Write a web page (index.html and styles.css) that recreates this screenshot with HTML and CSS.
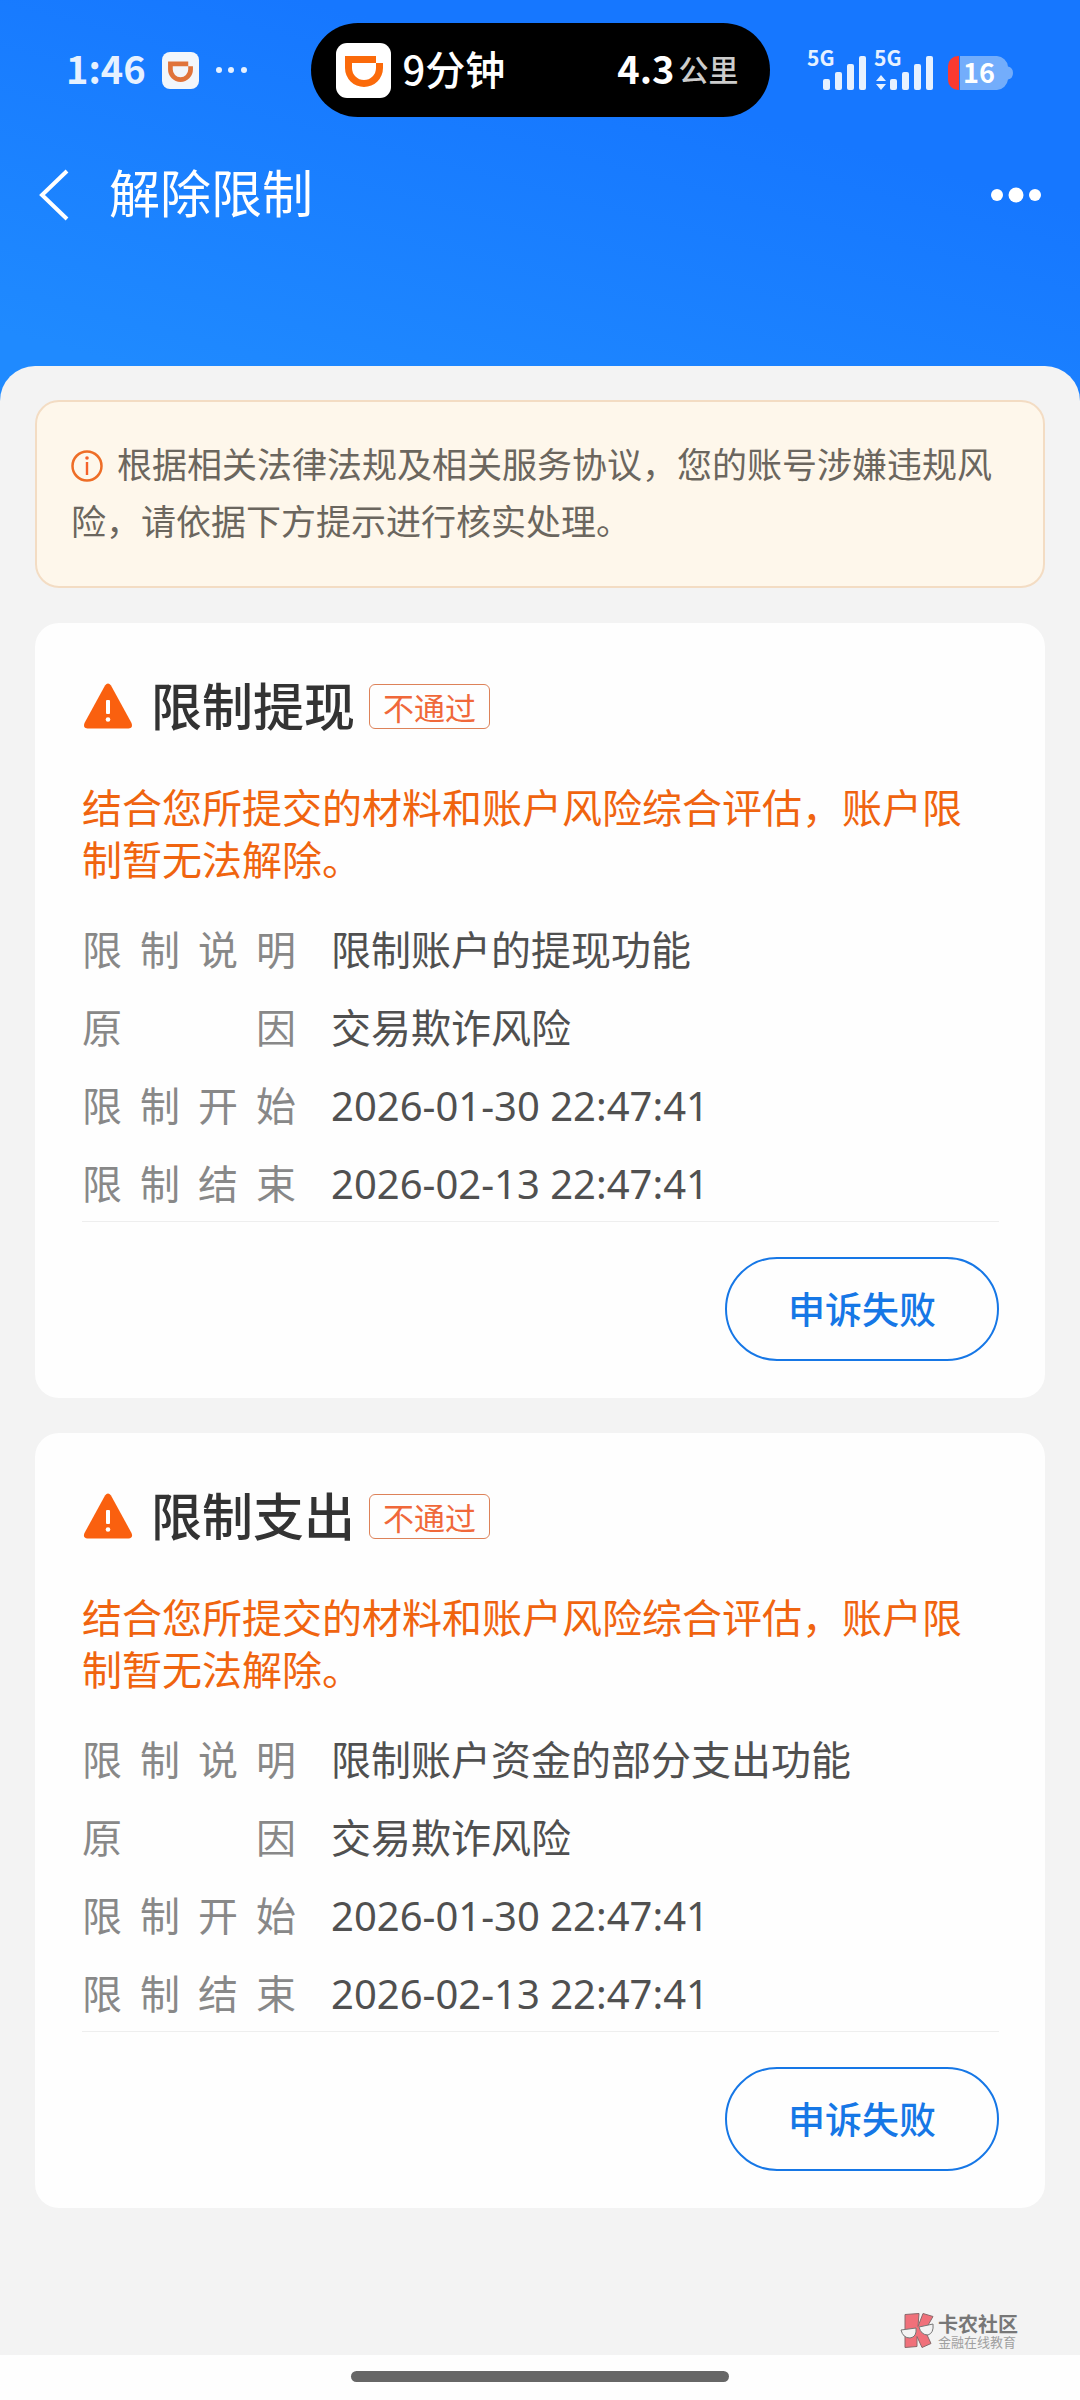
FILE: index.html
```html
<!DOCTYPE html>
<html lang="zh-CN">
<head>
  <meta charset="UTF-8">
  <meta name="viewport" content="width=device-width, initial-scale=1.0">
  <title>解除限制</title>
  <link rel="stylesheet" href="styles.css">
</head>
<body>
  <!-- Header Section -->
  <header class="header">
    <div class="status-bar">
      <div class="status-left">
        <span class="time">1:46</span>
        <svg class="app-icon-small" viewBox="0 0 55 55">
          <rect width="55" height="55" rx="12" fill="#f2f6fb"/>
          <path fill="#e0733a" fill-rule="evenodd" d="M9 14h30v7h7v5a18.500 18.500 0 0 1-37 0zM16 21v5a11.500 11.500 0 0 0 23 0v-5z"/>
        </svg>
        <svg class="status-dots" viewBox="0 0 32 8" fill="#e6f1ff">
          <circle cx="4" cy="4" r="3"/>
          <circle cx="16" cy="4" r="3"/>
          <circle cx="29" cy="4" r="3"/>
        </svg>
      </div>

      <div class="island">
        <svg class="app-icon" viewBox="0 0 55 55">
          <rect width="55" height="55" rx="11" fill="#fff"/>
          <path fill="#fb6a0a" fill-rule="evenodd" d="M9 13h31v7h7v5a19 19 0 0 1-38 0zM16 20v5a12 12 0 0 0 24 0v-5z"/>
        </svg>
        <span class="island-time">9分钟</span>
        <span class="island-distance">4.3</span>
        <span class="island-unit">公里</span>
      </div>

      <div class="status-right">
        <svg class="signal" viewBox="0 0 60 40" fill="#e6f1ff">
          <text class="signal-text" x="0" y="16">5G</text>
          <rect x="16" y="29" width="7" height="11" rx="2"/>
          <rect x="28" y="22" width="7" height="18" rx="2"/>
          <rect x="40" y="14" width="7" height="26" rx="2"/>
          <rect x="52" y="6" width="7" height="34" rx="2"/>
        </svg>
        <svg class="signal" viewBox="0 0 60 40" fill="#e6f1ff">
          <text class="signal-text" x="0" y="16">5G</text>
          <path d="M7 25l5 6h-10zM7 40l-5-6h10z"/>
          <rect x="16" y="29" width="7" height="11" rx="2"/>
          <rect x="28" y="22" width="7" height="18" rx="2"/>
          <rect x="40" y="14" width="7" height="26" rx="2"/>
          <rect x="52" y="6" width="7" height="34" rx="2"/>
        </svg>
        <svg class="battery" viewBox="0 0 66 34">
          <path fill="#73adfb" d="M12 0h37a12 12 0 0 1 11 10.500q5 1 5 6.500t-5 6.500a12 12 0 0 1-11 10.500h-37z"/>
          <path fill="#fb3a30" d="M11 0v34h-1a10 10 0 0 1-10-10v-14a10 10 0 0 1 10-10z"/>
          <text class="battery-text" x="15" y="27">16</text>
        </svg>
      </div>
    </div>

    <nav class="nav">
      <button class="icon-button" type="button" aria-label="返回">
        <svg width="32" height="52" viewBox="0 0 32 52" fill="none" stroke="#fff" stroke-width="4">
          <path d="M29 2L4 26l25 24"/>
        </svg>
      </button>
      <h1 class="nav-title">解除限制</h1>
      <button class="icon-button" type="button" aria-label="更多">
        <svg width="50" height="16" viewBox="0 0 50 16" fill="#fff">
          <circle cx="6" cy="8" r="6"/>
          <circle cx="25" cy="8" r="7.500"/>
          <circle cx="44" cy="8" r="6"/>
        </svg>
      </button>
    </nav>
  </header>

  <!-- Content Section -->
  <main class="sheet">
    <p class="notice">
      <svg class="notice-icon" viewBox="0 0 32 32">
        <circle cx="16" cy="16" r="14.500" fill="none" stroke="#ee6d26" stroke-width="2.500"/>
        <circle cx="16" cy="8" r="1.800" fill="#f5622a"/>
        <rect x="14.800" y="12" width="2.400" height="13" fill="#f5622a"/>
      </svg>根据相关法律法规及相关服务协议，您的账号涉嫌违规风险，请依据下方提示进行核实处理。
    </p>

    <section class="card">
      <div class="card-head">
        <svg class="warn-icon" viewBox="0 0 50 46">
          <path fill="#fa600f" d="M22 2.500q3-4 6 0L48.500 40q2 5-3 5.500h-41q-5-.500-3-5.500z"/>
          <rect x="23" y="17" width="4" height="14" rx="1" fill="#fff"/>
          <circle cx="25" cy="36.500" r="2.300" fill="#fff"/>
        </svg>
        <h2 class="card-title">限制提现</h2>
        <span class="tag">不通过</span>
      </div>
      <p class="result">结合您所提交的材料和账户风险综合评估，账户限制暂无法解除。</p>
      <dl class="details">
        <div class="row"><dt>限制说明</dt><dd>限制账户的提现功能</dd></div>
        <div class="row"><dt>原因</dt><dd>交易欺诈风险</dd></div>
        <div class="row"><dt>限制开始</dt><dd>2026-01-30 22:47:41</dd></div>
        <div class="row"><dt>限制结束</dt><dd>2026-02-13 22:47:41</dd></div>
      </dl>
      <div class="card-actions">
        <button class="appeal-button" type="button">申诉失败</button>
      </div>
    </section>

    <section class="card">
      <div class="card-head">
        <svg class="warn-icon" viewBox="0 0 50 46">
          <path fill="#fa600f" d="M22 2.500q3-4 6 0L48.500 40q2 5-3 5.500h-41q-5-.500-3-5.500z"/>
          <rect x="23" y="17" width="4" height="14" rx="1" fill="#fff"/>
          <circle cx="25" cy="36.500" r="2.300" fill="#fff"/>
        </svg>
        <h2 class="card-title">限制支出</h2>
        <span class="tag">不通过</span>
      </div>
      <p class="result">结合您所提交的材料和账户风险综合评估，账户限制暂无法解除。</p>
      <dl class="details">
        <div class="row"><dt>限制说明</dt><dd>限制账户资金的部分支出功能</dd></div>
        <div class="row"><dt>原因</dt><dd>交易欺诈风险</dd></div>
        <div class="row"><dt>限制开始</dt><dd>2026-01-30 22:47:41</dd></div>
        <div class="row"><dt>限制结束</dt><dd>2026-02-13 22:47:41</dd></div>
      </dl>
      <div class="card-actions">
        <button class="appeal-button" type="button">申诉失败</button>
      </div>
    </section>

    <div class="brand">
      <svg class="brand-logo" viewBox="0 0 36 36">
        <path fill="#f0707a" stroke="#8a6a6c" d="M5 1.500l14-1-1 13 5-13 10 3-8 14 6 13-9 4-5-11v10l-12 1z"/>
        <g fill="#f3f3f3" stroke="#777">
          <path d="M1 17l15-2q1 9-6 10-7 0-9-8z"/>
          <path d="M19 14l14-3q1 9-5 11-7 0-9-8z"/>
        </g>
      </svg>
      <div class="brand-text">
        <span class="brand-name">卡农社区</span>
        <span class="brand-sub">金融在线教育</span>
      </div>
    </div>
  </main>

  <!-- Home indicator -->
  <footer class="home-bar">
    <div class="home-indicator"></div>
  </footer>
</body>
</html>
```
FILE: styles.css
```css
:root {
  --sheet-bg: #f3f3f3;
  --card-bg: #fefefe;
  --orange: #f0640f;
  --blue: #1677e6;
  --title-color: #333333;
  --text-color: #505050;
  --label-color: #888888;
}

* {
  box-sizing: border-box;
}

body {
  margin: 0;
  min-height: 100vh;
  display: flex;
  flex-direction: column;
  font-family: "Noto Sans CJK SC", sans-serif;
  color: var(--text-color);
  background: var(--card-bg);
}

h1, h2, p, dl, dd {
  margin: 0;
}

svg {
  display: block;
  flex: none;
  overflow: visible;
}

button {
  font-family: inherit;
  background: none;
  cursor: pointer;
}

/* Header */
.header {
  padding: 23px 0 166px;
  color: #fff;
  background: linear-gradient(195deg, #1677ff 30%, #1f8aff 90%);
}

.status-bar {
  display: grid;
  grid-template-columns: 1fr auto 1fr;
  align-items: center;
  padding: 0 66px;
}

.status-left {
  display: flex;
  align-items: center;
}

.time {
  padding-bottom: 4px;
  font-size: 38px;
  line-height: 40px;
  font-weight: 700;
  color: #e6f1ff;
}

.app-icon-small {
  width: 37px;
  height: 37px;
  margin: 0 16px;
}

.status-dots {
  width: 32px;
  height: 8px;
}

.island {
  display: flex;
  align-items: center;
  width: 459px;
  height: 94px;
  padding: 0 31px 0 25px;
  border-radius: 47px;
  background: #000;
  line-height: 40px;
}

.island span {
  padding-bottom: 4px;
}

.app-icon {
  width: 55px;
  height: 55px;
}

.island-time {
  margin-left: 12px;
  font-size: 40px;
  font-weight: 500;
}

.island-distance {
  margin-left: auto;
  font-size: 38px;
  font-weight: 700;
}

.island-unit {
  margin-left: 4px;
  font-size: 30px;
  font-weight: 500;
  color: #cccccc;
}

.status-right {
  display: flex;
  justify-content: flex-end;
  align-items: flex-end;
  gap: 7px;
}

.signal {
  width: 60px;
  height: 40px;
}

.signal-text {
  font-size: 21px;
  font-weight: 700;
}

.battery {
  width: 66px;
  height: 34px;
  margin-left: 7px;
}

.battery-text {
  font-size: 27px;
  font-weight: 700;
  fill: #fff;
}

.nav {
  display: flex;
  align-items: center;
  height: 80px;
  margin-top: 38px;
  padding: 0 39px 0 38px;
}

.icon-button {
  padding: 0;
  border: none;
}

.nav-title {
  flex: 1;
  margin-left: 39px;
  padding-bottom: 8px;
  font-size: 51px;
  line-height: 72px;
  font-weight: 400;
}

/* Content sheet */
.sheet {
  flex: 1;
  display: flex;
  flex-direction: column;
  gap: 35px;
  margin-top: -35px;
  padding: 34px 35px 6px;
  border-radius: 35px 35px 0 0;
  background: var(--sheet-bg);
}

.notice {
  padding: 32px 34px 38px;
  border: 2px solid #f3dcc3;
  border-radius: 24px;
  background: #fef7eb;
  font-size: 35px;
  line-height: 57px;
  color: #6b665e;
}

.notice-icon {
  display: inline-block;
  width: 32px;
  height: 32px;
  margin-right: 14px;
  vertical-align: -4px;
}

.card {
  padding: 47px 46px 37px 47px;
  border-radius: 24px;
  background: var(--card-bg);
}

.card-head {
  display: flex;
  align-items: center;
}

.warn-icon {
  width: 50px;
  height: 46px;
  margin-left: 1px;
}

.card-title {
  margin-left: 18px;
  padding-bottom: 4px;
  font-size: 51px;
  line-height: 68px;
  font-weight: 500;
  color: var(--title-color);
}

.tag {
  margin-left: 14px;
  padding: 0 13px;
  border: 1px solid #dd8259;
  border-radius: 6px;
  font-size: 31px;
  line-height: 43px;
  color: #f0683a;
}

.result {
  margin-top: 38px;
  font-size: 40px;
  line-height: 52px;
  color: var(--orange);
}

.details {
  display: flex;
  flex-direction: column;
  gap: 20px;
  margin-top: 37px;
  padding-bottom: 8px;
  border-bottom: 1px solid #eeeeee;
  font-family: "Noto Sans", "Noto Sans CJK SC", sans-serif;
  font-size: 40px;
  line-height: 58px;
}

.row {
  display: flex;
  gap: 35px;
}

.row dt {
  width: 214px;
  text-align-last: justify;
  color: var(--label-color);
}

.card-actions {
  display: flex;
  justify-content: flex-end;
  margin-top: 35px;
}

.appeal-button {
  width: 274px;
  height: 104px;
  padding: 0 0 3px;
  border: 2px solid var(--blue);
  border-radius: 52px;
  font-size: 37px;
  font-weight: 500;
  color: var(--blue);
}

/* Brand mark */
.brand {
  display: flex;
  align-items: center;
  align-self: flex-end;
  gap: 2px;
  margin-top: auto;
  margin-right: 27px;
}

.brand-logo {
  width: 36px;
  height: 36px;
}

.brand-text {
  display: flex;
  flex-direction: column;
}

.brand-name {
  font-size: 20px;
  line-height: 22px;
  font-weight: 700;
  color: #777777;
}

.brand-sub {
  font-size: 13px;
  line-height: 14px;
  color: #a0a0a0;
}

/* Home indicator */
.home-bar {
  display: flex;
  justify-content: center;
  padding: 16px 0 18px;
}

.home-indicator {
  width: 35%;
  height: 11px;
  border-radius: 6px;
  background: #666666;
}
```
